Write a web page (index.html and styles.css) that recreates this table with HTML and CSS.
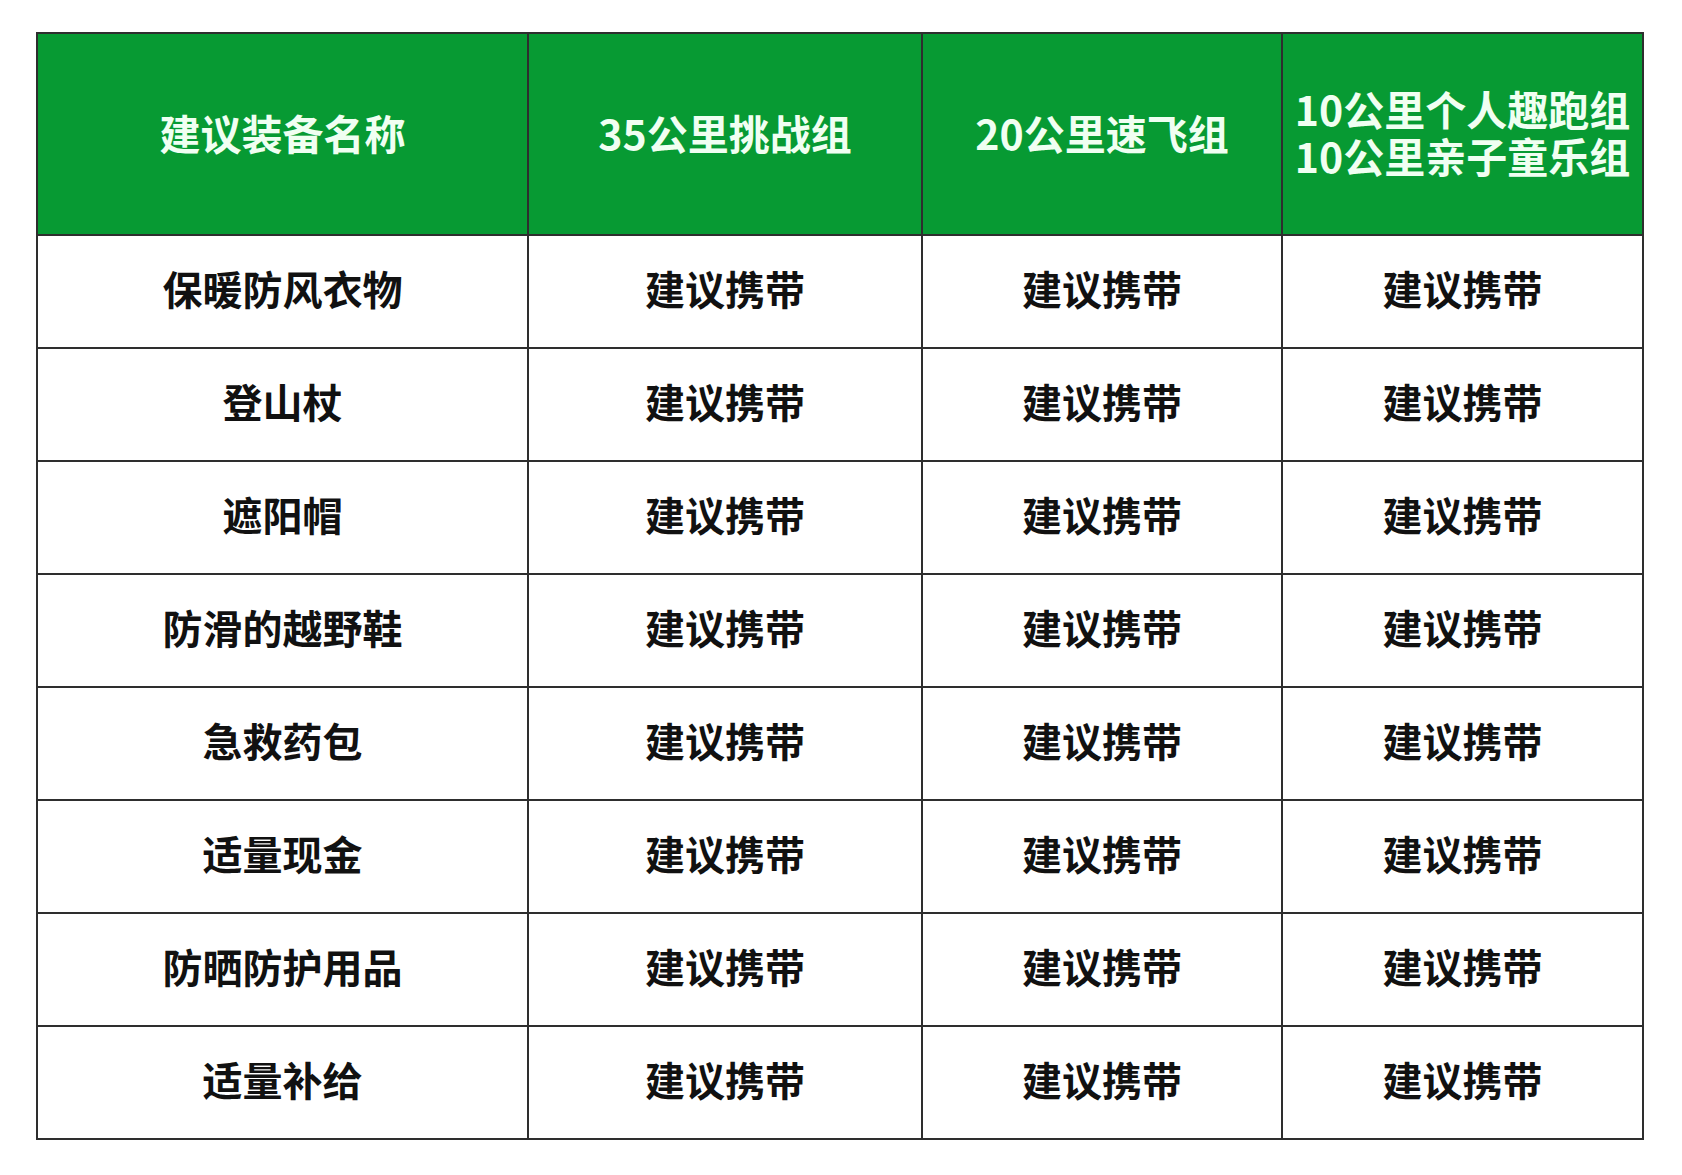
FILE: index.html
```html
<!DOCTYPE html>
<html lang="zh-CN">
<head>
<meta charset="utf-8">
<title>建议装备</title>
<link rel="stylesheet" href="styles.css">
</head>
<body>
<div class="page">
<table class="gear">
  <colgroup>
    <col class="c1"><col class="c2"><col class="c3"><col class="c4">
  </colgroup>
  <thead>
    <tr>
      <th>建议装备名称</th>
      <th>35公里挑战组</th>
      <th>20公里速飞组</th>
      <th class="two"><span class="ln">10公里个人趣跑组</span><span class="ln">10公里亲子童乐组</span></th>
    </tr>
  </thead>
  <tbody>
    <tr><td>保暖防风衣物</td><td>建议携带</td><td>建议携带</td><td>建议携带</td></tr>
    <tr><td>登山杖</td><td>建议携带</td><td>建议携带</td><td>建议携带</td></tr>
    <tr><td>遮阳帽</td><td>建议携带</td><td>建议携带</td><td>建议携带</td></tr>
    <tr><td>防滑的越野鞋</td><td>建议携带</td><td>建议携带</td><td>建议携带</td></tr>
    <tr><td>急救药包</td><td>建议携带</td><td>建议携带</td><td>建议携带</td></tr>
    <tr><td>适量现金</td><td>建议携带</td><td>建议携带</td><td>建议携带</td></tr>
    <tr><td>防晒防护用品</td><td>建议携带</td><td>建议携带</td><td>建议携带</td></tr>
    <tr><td>适量补给</td><td>建议携带</td><td>建议携带</td><td>建议携带</td></tr>
  </tbody>
</table>
</div>
</body>
</html>
```

FILE: styles.css
```css
html, body {
  margin: 0;
  padding: 0;
  background: #ffffff;
}

.page {
  padding: 32px 0 0 36px;
}

.gear {
  border-collapse: collapse;
  table-layout: fixed;
  width: 1606px;
  font-family: "Noto Sans CJK SC", "Noto Sans", sans-serif;
}

.c1 { width: 491px; }
.c2 { width: 394px; }
.c3 { width: 360px; }
.c4 { width: 361px; }

.gear th,
.gear td {
  border: 2px solid #2e2e2e;
  text-align: center;
  vertical-align: middle;
  padding: 0;
  white-space: nowrap;
}

.gear th {
  height: 196px;
  background: #079a33;
  color: #f0fff2;
  font-size: 41px;
  font-weight: 700;
  line-height: 47px;
  padding-bottom: 4px;
}

.gear th .ln {
  display: block;
  font-size: 41px;
  line-height: 47px;
}

.gear td {
  height: 104px;
  color: #111111;
  font-size: 40px;
  font-weight: 700;
  padding-bottom: 7px;
}
```
